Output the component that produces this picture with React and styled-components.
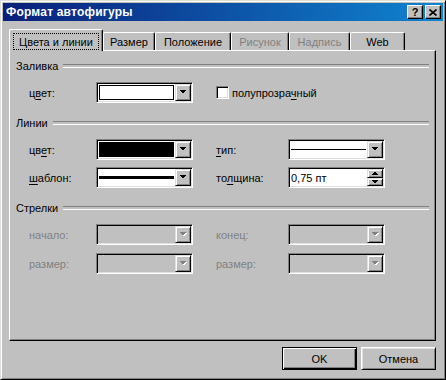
import React from "react";
import styled, { createGlobalStyle } from "styled-components";

const GlobalStyle = createGlobalStyle`
  html, body {
    margin: 0;
    padding: 0;
    background: #c0c0c0;
  }
  body {
    font-family: "Liberation Sans", Arial, sans-serif;
    font-size: 11px;
    color: #000;
  }
  * {
    box-sizing: border-box;
  }
`;

const tabs = [
  { label: "Цвета и линии", width: 94, active: true },
  { label: "Размер", width: 52 },
  { label: "Положение", width: 76 },
  { label: "Рисунок", width: 58, disabled: true },
  { label: "Надпись", width: 61, disabled: true },
  { label: "Web", width: 55 },
];

function Arrow({ up, disabled }) {
  const points = up ? "0,4 7,4 3.5,0.5" : "0,0 7,0 3.5,3.5";
  return (
    <svg width="8" height="5" viewBox="0 0 8 5" shapeRendering="crispEdges">
      {disabled && (
        <polygon points={points} fill="#fff" transform="translate(1,1)" />
      )}
      <polygon points={points} fill={disabled ? "#808080" : "#000"} />
    </svg>
  );
}

function ComboBox({ children, disabled }) {
  return (
    <StyledCombo $disabled={disabled}>
      <StyledField>{children}</StyledField>
      <StyledDropButton>
        <Arrow disabled={disabled} />
      </StyledDropButton>
    </StyledCombo>
  );
}

export default function App() {
  return (
    <>
      <GlobalStyle />
      <StyledWindow>
        <StyledTitleBar>
          <StyledTitle>Формат автофигуры</StyledTitle>
          <StyledCaptionButton>?</StyledCaptionButton>
          <StyledCaptionButton>
            <svg width="8" height="7" viewBox="0 0 8 7">
              <path
                d="M0.5 0.5 L7.5 6.5 M7.5 0.5 L0.5 6.5"
                stroke="#000"
                strokeWidth="1.6"
              />
            </svg>
          </StyledCaptionButton>
        </StyledTitleBar>

        <StyledBody>
          <StyledTabRow>
            {tabs.map((tab) => (
              <StyledTab
                key={tab.label}
                $width={tab.width}
                $active={tab.active}
                $disabled={tab.disabled}
              >
                {tab.active ? (
                  <StyledFocusLabel>{tab.label}</StyledFocusLabel>
                ) : (
                  tab.label
                )}
              </StyledTab>
            ))}
          </StyledTabRow>

          <StyledPanel>
            <StyledGroupHeading>Заливка</StyledGroupHeading>
            <StyledRow $mt={9}>
              <StyledLabel $w={67}>
                ц<u>в</u>ет:
              </StyledLabel>
              <ComboBox>
                <StyledSwatch $color="#fff" />
              </ComboBox>
              <StyledCheckRow>
                <StyledCheckbox />
                <span>
                  полупрозра<u>ч</u>ный
                </span>
              </StyledCheckRow>
            </StyledRow>

            <StyledGroupHeading $mt={13}>Линии</StyledGroupHeading>
            <StyledRow $mt={9}>
              <StyledLabel $w={67}>
                цв<u>е</u>т:
              </StyledLabel>
              <ComboBox>
                <StyledSwatch $color="#000" />
              </ComboBox>
              <StyledLabel $w={72} $second>
                <u>т</u>ип:
              </StyledLabel>
              <ComboBox>
                <StyledLineSample>
                  <StyledLine $thick={1} />
                </StyledLineSample>
              </ComboBox>
            </StyledRow>
            <StyledRow $mt={7}>
              <StyledLabel $w={67}>
                <u>ш</u>аблон:
              </StyledLabel>
              <ComboBox>
                <StyledLineSample>
                  <StyledLine $thick={3} />
                </StyledLineSample>
              </ComboBox>
              <StyledLabel $w={72} $second>
                то<u>л</u>щина:
              </StyledLabel>
              <StyledCombo>
                <StyledSpinText>0,75 пт</StyledSpinText>
                <StyledSpinColumn>
                  <StyledSpinButton $h={9}>
                    <Arrow up />
                  </StyledSpinButton>
                  <StyledSpinButton $h={8}>
                    <Arrow />
                  </StyledSpinButton>
                </StyledSpinColumn>
              </StyledCombo>
            </StyledRow>

            <StyledGroupHeading $mt={13}>Стрелки</StyledGroupHeading>
            <StyledRow $mt={9}>
              <StyledLabel $w={67} $disabled>
                начало:
              </StyledLabel>
              <ComboBox disabled />
              <StyledLabel $w={72} $second $disabled>
                конец:
              </StyledLabel>
              <ComboBox disabled />
            </StyledRow>
            <StyledRow $mt={8}>
              <StyledLabel $w={67} $disabled>
                размер:
              </StyledLabel>
              <ComboBox disabled />
              <StyledLabel $w={72} $second $disabled>
                размер:
              </StyledLabel>
              <ComboBox disabled />
            </StyledRow>
          </StyledPanel>

          <StyledFooter>
            <StyledButton $default>OK</StyledButton>
            <StyledButton>Отмена</StyledButton>
          </StyledFooter>
        </StyledBody>
      </StyledWindow>
    </>
  );
}

const StyledWindow = styled.div`
  width: 446px;
  height: 380px;
  display: flex;
  flex-direction: column;
  background: #c0c0c0;
  border: 1px solid;
  border-color: #dfdfdf #000 #000 #dfdfdf;
  box-shadow: inset 1px 1px #fff, inset -1px -1px #808080;
  padding: 2px;
`;

const StyledTitleBar = styled.div`
  height: 18px;
  display: flex;
  align-items: center;
  padding: 0 2px 0 3px;
  background: linear-gradient(90deg, #0a1f7a 0%, #1084d0 100%);
`;

const StyledTitle = styled.span`
  flex: 1;
  color: #fff;
  font-weight: bold;
  font-size: 12px;
  letter-spacing: 0.2px;
`;

const StyledCaptionButton = styled.div`
  width: 16px;
  height: 14px;
  margin-left: 2px;
  display: flex;
  align-items: center;
  justify-content: center;
  background: #c0c0c0;
  border: 1px solid;
  border-color: #fff #000 #000 #fff;
  box-shadow: inset -1px -1px #808080;
  font-weight: bold;
  font-size: 11px;
  line-height: 1;
`;

const StyledBody = styled.div`
  flex: 1;
  display: flex;
  flex-direction: column;
  padding: 8px 7px 0 6px;
`;

const StyledTabRow = styled.div`
  position: relative;
  z-index: 1;
  display: flex;
  align-items: flex-end;
  height: 21px;
`;

const StyledTab = styled.div`
  width: ${({ $width }) => $width}px;
  height: ${({ $active }) => ($active ? 22 : 18)}px;
  margin-bottom: ${({ $active }) => ($active ? -1 : 0)}px;
  padding-top: ${({ $active }) => ($active ? 2 : 0)}px;
  display: flex;
  align-items: center;
  justify-content: center;
  background: #c0c0c0;
  border-left: 1px solid #fff;
  border-top: 1px solid #fff;
  border-right: 1px solid #000;
  border-top-left-radius: 2px;
  border-top-right-radius: 2px;
  box-shadow: inset -1px 0 #808080;
  color: ${({ $disabled }) => ($disabled ? "#808080" : "#000")};
  white-space: nowrap;
`;

const StyledFocusLabel = styled.span`
  width: 86px;
  height: 17px;
  display: flex;
  align-items: center;
  justify-content: center;
  border: 1px dotted #000;
`;

const StyledPanel = styled.div`
  height: 291px;
  display: flex;
  flex-direction: column;
  padding: 8px 6px 0 6px;
  border: 1px solid;
  border-color: #fff #000 #000 #fff;
  box-shadow: inset -1px -1px #808080;
`;

const StyledGroupHeading = styled.div`
  display: flex;
  align-items: center;
  gap: 5px;
  height: 14px;
  margin-top: ${({ $mt }) => $mt || 0}px;
  &::after {
    content: "";
    flex: 1;
    height: 2px;
    border-top: 1px solid #808080;
    border-bottom: 1px solid #fff;
  }
`;

const StyledRow = styled.div`
  display: flex;
  align-items: center;
  height: 21px;
  padding-left: 13px;
  margin-top: ${({ $mt }) => $mt || 0}px;
`;

const StyledLabel = styled.span`
  width: ${({ $w }) => $w}px;
  margin-left: ${({ $second }) => ($second ? 23 : 0)}px;
  color: ${({ $disabled }) => ($disabled ? "#808080" : "#000")};
  u {
    text-underline-offset: 2px;
  }
`;

const StyledCombo = styled.div`
  width: 97px;
  height: 21px;
  display: flex;
  padding: 1px;
  border: 1px solid;
  border-color: #808080 #fff #fff #808080;
  box-shadow: inset 1px 1px #000, inset -1px -1px #dfdfdf;
  background: ${({ $disabled }) => ($disabled ? "#c0c0c0" : "#fff")};
`;

const StyledField = styled.div`
  flex: 1;
  display: flex;
`;

const StyledDropButton = styled.div`
  width: 16px;
  height: 17px;
  display: flex;
  align-items: center;
  justify-content: center;
  background: #c0c0c0;
  border: 1px solid;
  border-color: #dfdfdf #000 #000 #dfdfdf;
  box-shadow: inset 1px 1px #fff, inset -1px -1px #808080;
`;

const StyledSwatch = styled.div`
  flex: 1;
  margin: 1px;
  border: 1px solid #000;
  background: ${({ $color }) => $color};
`;

const StyledLineSample = styled.div`
  flex: 1;
  display: flex;
  align-items: center;
  padding: 0 1px;
`;

const StyledLine = styled.div`
  flex: 1;
  height: ${({ $thick }) => $thick}px;
  background: #000;
`;

const StyledSpinText = styled.div`
  flex: 1;
  display: flex;
  align-items: center;
  padding-left: 1px;
`;

const StyledSpinColumn = styled.div`
  display: flex;
  flex-direction: column;
`;

const StyledSpinButton = styled(StyledDropButton)`
  height: ${({ $h }) => $h}px;
`;

const StyledCheckRow = styled.label`
  display: flex;
  align-items: center;
  gap: 3px;
  margin-left: 23px;
  u {
    text-underline-offset: 2px;
  }
`;

const StyledCheckbox = styled.span`
  width: 13px;
  height: 13px;
  background: #fff;
  border: 1px solid;
  border-color: #808080 #fff #fff #808080;
  box-shadow: inset 1px 1px #000, inset -1px -1px #dfdfdf;
`;

const StyledFooter = styled.div`
  display: flex;
  justify-content: flex-end;
  gap: 4px;
  margin-top: 6px;
`;

const StyledButton = styled.div`
  width: 75px;
  height: 23px;
  display: flex;
  align-items: center;
  justify-content: center;
  background: #c0c0c0;
  border: 1px solid;
  border-color: ${({ $default }) =>
    $default ? "#000" : "#fff #000 #000 #fff"};
  box-shadow: ${({ $default }) =>
    $default
      ? "inset 1px 1px #fff, inset -1px -1px #000, inset -2px -2px #808080"
      : "inset 1px 1px #dfdfdf, inset -1px -1px #808080"};
`;
